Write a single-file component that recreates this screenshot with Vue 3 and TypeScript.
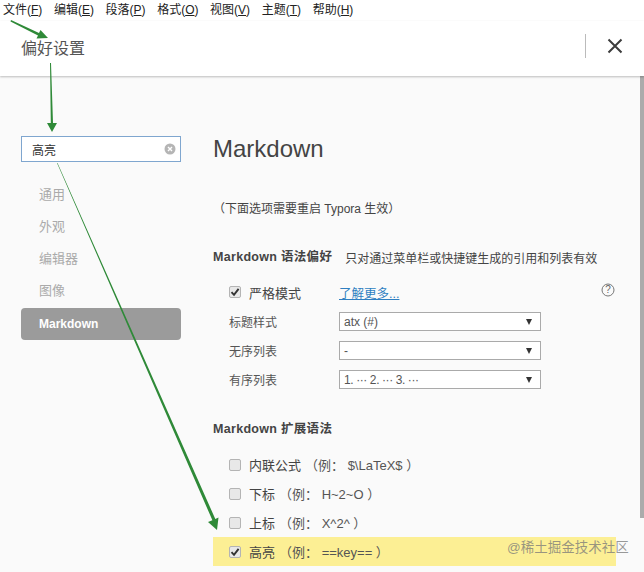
<script setup lang="ts">
const menus = [
  { label: '文件', key: 'F' },
  { label: '编辑', key: 'E' },
  { label: '段落', key: 'P' },
  { label: '格式', key: 'O' },
  { label: '视图', key: 'V' },
  { label: '主题', key: 'T' },
  { label: '帮助', key: 'H' },
]
const nav = ['通用', '外观', '编辑器', '图像']
const selects = [
  { label: '标题样式', value: 'atx (#)', tight: false },
  { label: '无序列表', value: '-', tight: false },
  { label: '有序列表', value: '1. ··· 2. ··· 3. ···', tight: true },
]
const exts = [
  { label: '内联公式', ex: '$\\LaTeX$', on: false },
  { label: '下标', ex: 'H~2~O', on: false },
  { label: '上标', ex: 'X^2^', on: false },
  { label: '高亮', ex: '==key==', on: true },
]
</script>

<template>
  <div class="page">
    <div class="menubar">
      <span v-for="m in menus" :key="m.key" class="menu">{{ m.label }}(<u>{{ m.key }}</u>)</span>
    </div>
    <header class="header">
      <span class="title">偏好设置</span>
      <span class="divider"></span>
      <svg class="close" width="16" height="16" viewBox="0 0 16 16">
        <path d="M1.5 1.5L14.5 14.5M14.5 1.5L1.5 14.5" stroke="#3c3c3c" stroke-width="2" fill="none" />
      </svg>
    </header>
    <main class="main">
      <aside class="side">
        <div class="search">
          <span>高亮</span>
          <svg width="12" height="12" viewBox="0 0 12 12">
            <circle cx="6" cy="6" r="5.5" fill="#b5b5b5" />
            <path d="M4 4L8 8M8 4L4 8" stroke="#fff" stroke-width="1.4" />
          </svg>
        </div>
        <nav class="nav">
          <div v-for="n in nav" :key="n" class="nav-item">{{ n }}</div>
          <div class="nav-item active">Markdown</div>
        </nav>
      </aside>
      <section class="content">
        <h1>Markdown</h1>
        <p class="restart">（下面选项需要重启 Typora 生效）</p>
        <div class="section-head">
          <h2>Markdown 语法偏好</h2>
          <span>只对通过菜单栏或快捷键生成的引用和列表有效</span>
        </div>
        <div class="strict">
          <span class="check on">
            <svg width="10" height="10" viewBox="0 0 10 10"><path d="M1.5 5.2L4 7.8L8.6 1.8" stroke="#333" stroke-width="1.9" fill="none" /></svg>
          </span>
          <span class="strict-label">严格模式</span>
          <a class="link">了解更多...</a>
          <svg class="help" width="14" height="14" viewBox="0 0 14 14">
            <circle cx="7" cy="7" r="6" fill="none" stroke="#777" stroke-width="1" />
            <text x="7" y="10.4" text-anchor="middle" class="help-q">?</text>
          </svg>
        </div>
        <div class="select-list">
          <div v-for="s in selects" :key="s.label" class="select-row">
            <span class="select-label">{{ s.label }}</span>
            <div class="select">
              <span :class="{ tight: s.tight }">{{ s.value }}</span>
              <i class="caret"></i>
            </div>
          </div>
        </div>
        <h2 class="ext-head">Markdown 扩展语法</h2>
        <div class="ext-list">
          <div v-for="e in exts" :key="e.label" class="ext-row" :class="{ hl: e.on }">
            <span class="check" :class="{ on: e.on }">
              <svg v-if="e.on" width="10" height="10" viewBox="0 0 10 10"><path d="M1.5 5.2L4 7.8L8.6 1.8" stroke="#333" stroke-width="1.9" fill="none" /></svg>
            </span>
            <span class="ext-label">{{ e.label }}</span>
            <span class="ext-ex">（例： {{ e.ex }} ）</span>
          </div>
        </div>
      </section>
      <div class="scrollbar"></div>
    </main>

    <svg class="arrows" width="644" height="572" viewBox="0 0 644 572">
      <path d="M11 20L39 33L40.5 30L48 38L36.5 38.6L38 35.4L10.5 21.5Z" fill="#2f8a38" />
      <path d="M50 63L51 63L53 123L57 123L52 132L47 123L50.8 123Z" fill="#2f8a38" />
      <path d="M57 163L57.5 163L215.3 519L218.5 517.5L217 530L208 522L212.4 520.3Z" fill="#2f8a38" />
    </svg>
    <span class="watermark">@稀土掘金技术社区</span>
  </div>
</template>

<style>
html, body { margin: 0; padding: 0; background: #fff; }
</style>

<style scoped>
.page {
  position: relative;
  width: 644px;
  height: 572px;
  overflow: hidden;
  display: flex;
  flex-direction: column;
  background: #fafafa;
  color: #444;
  font-family: "Liberation Sans", "Noto Sans CJK SC", sans-serif;
}
.menubar {
  height: 21px;
  flex: none;
  display: flex;
  gap: 11.6px;
  padding-left: 3px;
  background: #fff;
  font-size: 12px;
  line-height: 21px;
  color: #222;
}
.menu { white-space: nowrap; }
.header {
  height: 55px;
  flex: none;
  display: flex;
  align-items: center;
  padding: 0 21px;
  background: #fff;
  box-shadow: 0 1px 2px rgba(0, 0, 0, 0.25);
  position: relative;
  z-index: 1;
}
.title {
  font-size: 16px;
  color: #555;
  margin-right: auto;
  margin-top: -3px;
}
.divider {
  width: 1px;
  height: 24px;
  background: #bbb;
  margin-right: 21px;
  margin-top: -5px;
}
.close { margin-top: -5px; }
.main {
  flex: 1;
  display: flex;
  min-height: 0;
  position: relative;
}
.side {
  width: 160px;
  margin-left: 21px;
  padding-top: 60px;
  flex: none;
}
.search {
  height: 24px;
  border: 1px solid #7fa6cf;
  background: #fff;
  display: flex;
  align-items: center;
  justify-content: space-between;
  padding: 0 4px 0 10px;
  font-size: 12px;
  color: #333;
}
.nav { margin-top: 17px; }
.nav-item {
  height: 32px;
  line-height: 32px;
  padding-left: 18px;
  font-size: 13px;
  color: #aaa;
  border-radius: 4px;
}
.nav-item.active {
  margin-top: 1px;
  background: #9b9b9b;
  color: #fff;
  font-size: 12px;
  font-weight: 700;
}
.content {
  flex: 1;
  margin-left: 32px;
  padding-top: 59px;
  min-width: 0;
}
h1 {
  margin: 0;
  font-size: 24px;
  font-weight: 400;
  line-height: 28px;
  color: #444;
}
.restart {
  margin: 38px 0 0;
  font-size: 12px;
  line-height: 16px;
  color: #444;
}
.section-head {
  display: flex;
  align-items: center;
  margin-top: 32px;
  height: 16px;
}
h2 {
  margin: 0;
  font-size: 12.5px;
  font-weight: 700;
  line-height: 16px;
  letter-spacing: 0.3px;
  color: #444;
}
.section-head span {
  margin-left: 13px;
  font-size: 12px;
  color: #444;
}
.strict {
  display: flex;
  align-items: center;
  height: 20px;
  margin-top: 17px;
  padding-left: 16px;
  width: 402px;
  box-sizing: border-box;
  font-size: 13px;
}
.check {
  width: 12px;
  height: 12px;
  box-sizing: border-box;
  border: 1px solid #b4b4b4;
  border-radius: 2px;
  background: #e8e8e8;
  display: flex;
  align-items: center;
  justify-content: center;
  flex: none;
}
.strict-label { margin-left: 8px; width: 90px; color: #444; }
.link {
  color: #2f7fc1;
  text-decoration: underline;
  font-size: 12.5px;
}
.help { margin-left: auto; margin-top: -5px; }
.help-q { font-size: 10px; fill: #666; font-family: "Liberation Sans", sans-serif; }
.select-list { margin-top: 5px; }
.select-row {
  display: flex;
  align-items: center;
  height: 29px;
  padding-left: 16px;
  font-size: 12px;
}
.select-label { width: 110px; color: #555; }
.select {
  width: 202px;
  height: 19px;
  box-sizing: border-box;
  border: 1px solid #aaa;
  background: #fff;
  display: flex;
  align-items: center;
  justify-content: space-between;
  padding: 0 8px 0 4px;
  font-size: 12px;
  color: #555;
}
.tight { letter-spacing: -0.4px; }
.caret {
  width: 0;
  height: 0;
  border-left: 3.5px solid transparent;
  border-right: 3.5px solid transparent;
  border-top: 6px solid #333;
}
.ext-head { margin-top: 27px; }
.ext-list { margin-top: 13px; }
.ext-row {
  display: flex;
  align-items: center;
  height: 29px;
  padding-left: 16px;
  width: 403px;
  box-sizing: border-box;
  font-size: 13px;
}
.ext-row.hl { background: #fcef94; }
.ext-label { margin-left: 8px; color: #444; }
.ext-ex { margin-left: 4px; color: #555; white-space: pre; }
.scrollbar {
  position: absolute;
  right: 0;
  top: 0;
  width: 4px;
  height: 442px;
  background: #ababab;
}
.arrows {
  position: absolute;
  left: 0;
  top: 0;
  pointer-events: none;
  z-index: 2;
}
.watermark {
  position: absolute;
  left: 507px;
  top: 539px;
  font-size: 13.5px;
  line-height: 18px;
  color: rgba(120, 120, 120, 0.75);
  z-index: 3;
  white-space: nowrap;
}
</style>
